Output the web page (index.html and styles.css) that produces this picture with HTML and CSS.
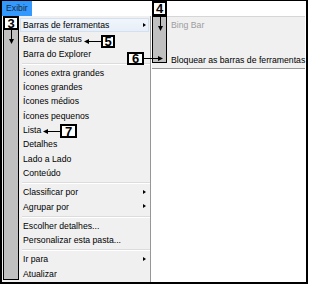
FILE: index.html
```html
<!DOCTYPE html>
<html lang="pt-BR">
<head>
  <meta charset="UTF-8">
  <title>Exibir</title>
  <link rel="stylesheet" href="styles.css">
</head>
<body>
  <div class="window">
    <div class="menubar">
      <span class="menubar-item active">Exibir</span>
    </div>
    <div class="workspace">
      <ul class="menu">
        <li class="item hot">Barras de ferramentas<span class="arrow"></span></li>
        <li class="item">Barra de status</li>
        <li class="item">Barra do Explorer</li>
        <li class="sep"></li>
        <li class="item">Ícones extra grandes</li>
        <li class="item">Ícones grandes</li>
        <li class="item">Ícones médios</li>
        <li class="item">Ícones pequenos</li>
        <li class="item">Lista</li>
        <li class="item">Detalhes</li>
        <li class="item">Lado a Lado</li>
        <li class="item">Conteúdo</li>
        <li class="sep"></li>
        <li class="item">Classificar por<span class="arrow"></span></li>
        <li class="item">Agrupar por<span class="arrow"></span></li>
        <li class="sep"></li>
        <li class="item">Escolher detalhes...</li>
        <li class="item">Personalizar esta pasta...</li>
        <li class="sep"></li>
        <li class="item">Ir para<span class="arrow"></span></li>
        <li class="item">Atualizar</li>
      </ul>
      <div class="content"></div>
    </div>

    <!-- submenu aberto -->
    <ul class="submenu">
      <li class="item disabled">Bing Bar</li>
      <li class="item lock">Bloquear as barras de ferramentas</li>
    </ul>
  </div>

  <!-- anotações -->
  <div class="bar bar-3"></div>
  <div class="bar bar-4"></div>

  <svg class="arrows" width="310" height="285" viewBox="0 0 310 285">
    <g stroke="#000" stroke-width="1">
      <line x1="11.5" y1="30" x2="11.5" y2="40"/>
      <line x1="160.5" y1="16" x2="160.5" y2="27"/>
      <line x1="101" y1="41.5" x2="88" y2="41.5"/>
      <line x1="144" y1="58.5" x2="159" y2="58.5"/>
      <line x1="60" y1="131.5" x2="47" y2="131.5"/>
    </g>
    <g fill="#000">
      <polygon points="9,39 14,39 11.5,44"/>
      <polygon points="158,26 163,26 160.5,31"/>
      <polygon points="89,39 89,44 84,41.5"/>
      <polygon points="158,56 158,61 163,58.5"/>
      <polygon points="48,129 48,134 43,131.5"/>
    </g>
  </svg>

  <div class="tag tag-3">3</div>
  <div class="tag tag-4">4</div>
  <div class="tag tag-5">5</div>
  <div class="tag tag-6">6</div>
  <div class="tag tag-7">7</div>
</body>
</html>
```

FILE: styles.css
```css
:root {
  --menu-bg: #f0f0f0;
  --menu-border: #979797;
  --highlight: #3399ff;
}
body {
  margin: 0;
  background: #fff;
  font-family: 'Liberation Sans', Arial, sans-serif;
  font-size: 8.7px;
  color: #000;
  position: relative;
  width: 310px;
  height: 285px;
  overflow: hidden;
}
ul {
  list-style: none;
  margin: 0;
  padding: 0;
}
.window {
  position: relative;
  width: 304px;
  height: 281px;
  border: 2px solid #000;
  border-top-width: 1px;
  background: #fff;
}
.menubar {
  height: 15px;
  display: flex;
}
.menubar-item {
  padding: 0 4px;
  line-height: 15px;
  color: #1b2a3a;
}
.menubar-item.active {
  background: var(--highlight);
}
.workspace {
  display: flex;
  height: 266px;
}
.menu {
  width: 148px;
  padding-top: 2px;
  background: var(--menu-bg);
  border-right: 1px solid var(--menu-border);
  box-shadow: 1px 0 0 #cfcfcf;
}
.content {
  flex: 1;
  background: #fff;
}
.item {
  position: relative;
  height: 14.3px;
  line-height: 14.3px;
  margin: 0 1px 0 18px;
  padding-left: 3px;
  white-space: nowrap;
}
.item.hot {
  background: linear-gradient(#f2f6fb, #e6eef8);
  box-shadow: inset 0 0 0 1px #d3e0f0;
}
.arrow {
  position: absolute;
  right: 3px;
  top: 50%;
  margin-top: -2.5px;
  border-left: 3px solid #000;
  border-top: 2.5px solid transparent;
  border-bottom: 2.5px solid transparent;
}
.sep {
  position: relative;
  height: 5px;
}
.sep::before {
  content: '';
  position: absolute;
  left: 20px;
  right: 0;
  top: 2px;
  border-top: 1px solid #dcdcdc;
  border-bottom: 1px solid #fff;
}

/* submenu */
.submenu {
  position: absolute;
  left: 150px;
  top: 15px;
  width: 153px;
  height: 50px;
  padding-top: 1px;
  box-sizing: border-box;
  background: var(--menu-bg);
  border-top: 1px solid #d6d6d6;
  border-bottom: 1px solid var(--menu-border);
  box-sizing: content-box;
}
.submenu .item {
  margin: 0;
  padding-left: 19px;
}
.submenu .disabled {
  color: #9d9d9d;
}
.submenu .lock {
  margin-top: 20.5px;
}

/* anotações */
.bar {
  position: absolute;
  box-sizing: border-box;
  background: #c0c0c0;
  border: 1px solid #000;
}
.bar-3 {
  left: 3px;
  top: 16px;
  width: 16px;
  height: 264px;
}
.bar-4 {
  left: 152px;
  top: 16px;
  width: 15px;
  height: 47px;
}
.arrows {
  position: absolute;
  left: 0;
  top: 0;
  pointer-events: none;
}
.tag {
  position: absolute;
  box-sizing: border-box;
  background: #fff;
  border: 2px solid #000;
  font-weight: bold;
  font-size: 13px;
  display: flex;
  align-items: center;
  justify-content: center;
  line-height: 1;
}
.tag-3 { left: 3px; top: 16px; width: 16px; height: 14px; }
.tag-4 { left: 152px; top: 1px; width: 15px; height: 15px; }
.tag-5 { left: 101px; top: 35px; width: 14px; height: 13px; }
.tag-6 { left: 127px; top: 52px; width: 17px; height: 13px; }
.tag-7 { left: 60px; top: 124px; width: 17px; height: 14px; }
```
